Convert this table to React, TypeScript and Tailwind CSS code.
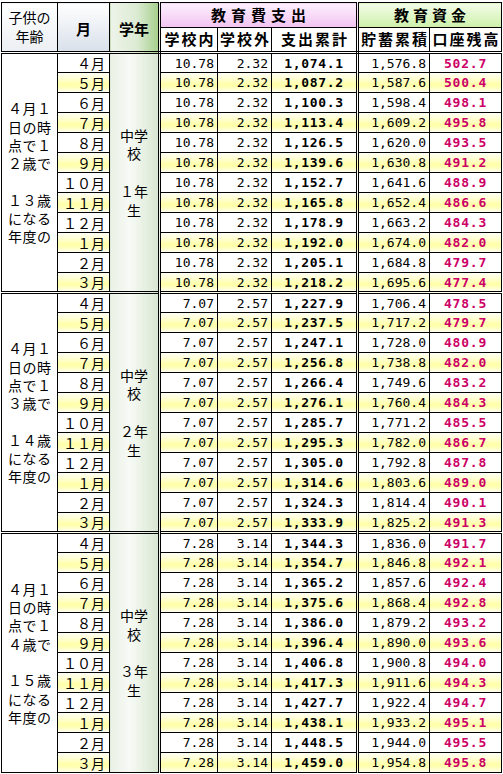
import React from "react"

type Section = {
  inside: string
  outside: string
  total: string[]
  saved: string[]
  balance: string[]
  age: string[]
  grade: string[]
}

const months = ["４月", "５月", "６月", "７月", "８月", "９月", "１０月", "１１月", "１２月", "１月", "２月", "３月"]

const sections: Section[] = [
  {
    inside: "10.78",
    outside: "2.32",
    total: ["1,074.1", "1,087.2", "1,100.3", "1,113.4", "1,126.5", "1,139.6", "1,152.7", "1,165.8", "1,178.9", "1,192.0", "1,205.1", "1,218.2"],
    saved: ["1,576.8", "1,587.6", "1,598.4", "1,609.2", "1,620.0", "1,630.8", "1,641.6", "1,652.4", "1,663.2", "1,674.0", "1,684.8", "1,695.6"],
    balance: ["502.7", "500.4", "498.1", "495.8", "493.5", "491.2", "488.9", "486.6", "484.3", "482.0", "479.7", "477.4"],
    age: ["４月１", "日の時", "点で１", "２歳で", "", "１３歳", "になる", "年度の"],
    grade: ["中学", "校", "", "１年", "生"],
  },
  {
    inside: "7.07",
    outside: "2.57",
    total: ["1,227.9", "1,237.5", "1,247.1", "1,256.8", "1,266.4", "1,276.1", "1,285.7", "1,295.3", "1,305.0", "1,314.6", "1,324.3", "1,333.9"],
    saved: ["1,706.4", "1,717.2", "1,728.0", "1,738.8", "1,749.6", "1,760.4", "1,771.2", "1,782.0", "1,792.8", "1,803.6", "1,814.4", "1,825.2"],
    balance: ["478.5", "479.7", "480.9", "482.0", "483.2", "484.3", "485.5", "486.7", "487.8", "489.0", "490.1", "491.3"],
    age: ["４月１", "日の時", "点で１", "３歳で", "", "１４歳", "になる", "年度の"],
    grade: ["中学", "校", "", "２年", "生"],
  },
  {
    inside: "7.28",
    outside: "3.14",
    total: ["1,344.3", "1,354.7", "1,365.2", "1,375.6", "1,386.0", "1,396.4", "1,406.8", "1,417.3", "1,427.7", "1,438.1", "1,448.5", "1,459.0"],
    saved: ["1,836.0", "1,846.8", "1,857.6", "1,868.4", "1,879.2", "1,890.0", "1,900.8", "1,911.6", "1,922.4", "1,933.2", "1,944.0", "1,954.8"],
    balance: ["491.7", "492.1", "492.4", "492.8", "493.2", "493.6", "494.0", "494.3", "494.7", "495.1", "495.5", "495.8"],
    age: ["４月１", "日の時", "点で１", "４歳で", "", "１５歳", "になる", "年度の"],
    grade: ["中学", "校", "", "３年", "生"],
  },
]

// yellow band on every other month
const hi = "bg-[linear-gradient(to_bottom,#fffff4_0%,#ffffa6_62%,#fffff2_100%)]"
const num = "font-['DejaVu_Sans_Mono','Noto_Sans_CJK_JP',monospace] text-[13px]"
const dblR = "border-r-[3px] [border-right-style:double]"
const dblT = "border-t-[3px] [border-top-style:double]"
const dblB = "border-b-[3px] [border-bottom-style:double]"

export default function App() {
  return (
    <div className="pl-[1px] pt-[2px] bg-white font-['Noto_Sans_CJK_JP',sans-serif] text-black">
      <table className="w-[500px] table-fixed border-collapse border border-black">
        <colgroup>
          <col className="w-[56px]" />
          <col className="w-[52px]" />
          <col className="w-[50px]" />
          <col className="w-[58px]" />
          <col className="w-[54px]" />
          <col className="w-[86px]" />
          <col className="w-[72px]" />
          <col className="w-[72px]" />
        </colgroup>
        <thead>
          <tr className="h-[25px]">
            <th
              rowSpan={2}
              className={`border border-black ${dblB} bg-[linear-gradient(to_bottom,#ffffff,#eceff3)] text-[14px] font-normal leading-[19px]`}
            >
              子供の
              <br />
              年齢
            </th>
            <th
              rowSpan={2}
              className={`border border-black ${dblB} bg-[linear-gradient(to_bottom,#ffffff,#d9e0ea)] pt-[5px] text-[15px] font-bold`}
            >
              月
            </th>
            <th
              rowSpan={2}
              className={`border border-black ${dblB} ${dblR} bg-[linear-gradient(to_right,#eef3ea,#dcebd3_55%,#a6cf8c)] pt-[5px] text-[15px] font-bold`}
            >
              学年
            </th>
            <th
              colSpan={3}
              className={`border border-black ${dblR} bg-[linear-gradient(to_bottom,#fdf0fd,#f2c3f2)] pl-[5px] text-[15px] font-bold tracking-[5px]`}
            >
              教育費支出
            </th>
            <th
              colSpan={2}
              className="border border-black bg-[linear-gradient(to_bottom,#f4fde9,#cdf0aa)] pl-[4px] text-[15px] font-bold tracking-[4px]"
            >
              教育資金
            </th>
          </tr>
          <tr className="h-[25px]">
            {["学校内", "学校外", "支出累計", "貯蓄累積", "口座残高"].map((h, i) => (
              <th
                key={h}
                className={`border border-black ${dblB} ${i === 2 ? dblR : ""} bg-white pl-[2px] text-[15px] font-bold tracking-[2px] whitespace-nowrap`}
              >
                {h}
              </th>
            ))}
          </tr>
        </thead>
        <tbody>
          {sections.map((s, si) =>
            months.map((m, i) => {
              const odd = i % 2 === 1
              const top = i === 0 ? dblT : ""
              const bg = odd ? hi : "bg-white"
              return (
                <tr key={`${si}-${m}`} className="h-[20px]">
                  {i === 0 && (
                    <td
                      rowSpan={12}
                      className={`border border-black ${top} bg-white pl-[6px] align-middle text-[14px] tracking-[0.5px]`}
                    >
                      {s.age.map((l, k) => (
                        <div key={k} className="h-[18.3px] leading-[18.3px] whitespace-nowrap">
                          {l}
                        </div>
                      ))}
                    </td>
                  )}
                  <td className={`border border-black ${top} ${bg} pr-[4px] text-right text-[14px] leading-none whitespace-nowrap`}>
                    {m}
                  </td>
                  {i === 0 && (
                    <td
                      rowSpan={12}
                      className={`border border-black ${top} ${dblR} bg-[linear-gradient(to_right,#e9f0e5,#f7faf5_40%,#d8e6d0)] text-center align-middle text-[14px]`}
                    >
                      {s.grade.map((l, k) => (
                        <div key={k} className="h-[18.7px] leading-[18.7px] whitespace-nowrap">
                          {l}
                        </div>
                      ))}
                    </td>
                  )}
                  <td className={`border border-black ${top} ${bg} ${num} pr-[3px] text-right leading-none`}>{s.inside}</td>
                  <td className={`border border-black ${top} ${bg} ${num} pr-[3px] text-right leading-none`}>{s.outside}</td>
                  <td className={`border border-black ${top} ${dblR} ${bg} ${num} text-center font-bold tracking-[0.7px] leading-none`}>
                    {s.total[i]}
                  </td>
                  <td className={`border border-black ${top} ${bg} ${num} pr-[3px] text-right leading-none`}>{s.saved[i]}</td>
                  <td className={`border border-black ${top} ${bg} ${num} text-center font-bold tracking-[0.8px] leading-none text-[#cc0066]`}>
                    {s.balance[i]}
                  </td>
                </tr>
              )
            })
          )}
        </tbody>
      </table>
    </div>
  )
}
